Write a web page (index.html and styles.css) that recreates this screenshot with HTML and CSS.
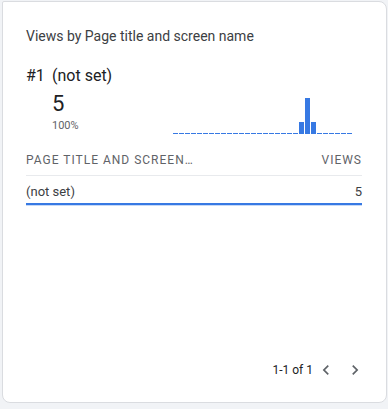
FILE: index.html
```html
<!DOCTYPE html>
<html lang="en">
<head>
    <meta charset="UTF-8">
    <meta name="viewport" content="width=device-width, initial-scale=1.0">
    <title>Views by Page title and screen name</title>
    <link rel="stylesheet" href="styles.css">
</head>
<body>
    <div class="card">
        <div class="card-title">Views by Page title and screen name</div>

        <div class="top-item">
            <span class="rank">#1</span>
            <span class="item-name">(not set)</span>
        </div>

        <div class="summary">
            <div class="value-block">
                <div class="value">5</div>
                <div class="percent">100%</div>
            </div>
            <div class="sparkline">
                <span class="bar"></span><span class="bar"></span><span class="bar"></span>
                <span class="bar"></span><span class="bar"></span><span class="bar"></span>
                <span class="bar"></span><span class="bar"></span><span class="bar"></span>
                <span class="bar"></span><span class="bar"></span><span class="bar"></span>
                <span class="bar"></span><span class="bar"></span><span class="bar"></span>
                <span class="bar"></span><span class="bar"></span><span class="bar"></span>
                <span class="bar"></span><span class="bar"></span><span class="bar"></span>
                <span class="bar" style="height: 12px"></span>
                <span class="bar" style="height: 36px"></span>
                <span class="bar" style="height: 12px"></span>
                <span class="bar"></span><span class="bar"></span><span class="bar"></span>
                <span class="bar"></span><span class="bar"></span><span class="bar"></span>
            </div>
        </div>

        <div class="table-head">
            <span>Page title and screen…</span>
            <span>Views</span>
        </div>
        <div class="table-row">
            <span>(not set)</span>
            <span>5</span>
        </div>

        <div class="pager">
            <span class="pager-text">1-1 of 1</span>
            <button class="pager-btn" aria-label="Previous">
                <svg width="20" height="20" viewBox="0 0 24 24"><path d="M15.41 7.41L14 6l-6 6 6 6 1.41-1.41L10.83 12z"/></svg>
            </button>
            <button class="pager-btn" aria-label="Next">
                <svg width="20" height="20" viewBox="0 0 24 24"><path d="M10 6L8.59 7.41 13.17 12l-4.58 4.59L10 18l6-6z"/></svg>
            </button>
        </div>
    </div>
</body>
</html>
```

FILE: styles.css
```css
body {
    margin: 0;
    background-color: #f1f3f6;
    font-family: Roboto, "Liberation Sans", sans-serif;
}
.card {
    box-sizing: border-box;
    margin: 1px 0 0 2px;
    width: 385px;
    height: 402px;
    background: #fff;
    border: 1px solid #dadce0;
    border-radius: 2px 8px 8px 8px;
    padding: 24px 24px 20px 23px;
    display: flex;
    flex-direction: column;
}
.card-title {
    font-size: 14px;
    line-height: 20px;
    color: #3c4043;
}
.top-item {
    margin-top: 18px;
    display: flex;
    font-size: 16px;
    line-height: 24px;
    color: #202124;
}
.rank {
    width: 26px;
}
.summary {
    display: flex;
    justify-content: space-between;
    align-items: flex-end;
    margin-top: 2px;
}
.value-block {
    padding-left: 26px;
}
.value {
    font-size: 22px;
    line-height: 28px;
    color: #202124;
}
.percent {
    font-size: 11px;
    line-height: 16px;
    color: #5f6368;
}
.sparkline {
    display: flex;
    align-items: flex-end;
    gap: 1px;
    height: 36px;
    margin-right: 10px;
}
.bar {
    width: 5px;
    height: 1px;
    background-color: #3779e3;
}
.table-head {
    display: flex;
    justify-content: space-between;
    margin-top: 18px;
    padding-bottom: 7px;
    border-bottom: 1px solid #e8eaed;
    font-size: 12px;
    line-height: 16px;
    letter-spacing: 1px;
    text-transform: uppercase;
    color: #5f6368;
}
.table-row {
    display: flex;
    justify-content: space-between;
    padding: 6px 0 1px;
    border-bottom: 2px solid #3779e3;
    box-shadow: 0 1px 0 #c6d9f7;
    font-size: 13px;
    line-height: 20px;
    color: #3c4043;
}
.pager {
    margin-top: auto;
    margin-right: -3px;
    display: flex;
    align-items: center;
    justify-content: flex-end;
    font-size: 12px;
    color: #202124;
}
.pager-text {
    margin-right: 3px;
}
.pager-btn {
    border: none;
    background: none;
    padding: 0;
    width: 20px;
    height: 24px;
    display: flex;
    align-items: center;
    fill: #5f6368;
    cursor: pointer;
}
.pager-btn + .pager-btn {
    margin-left: 9px;
}
```
